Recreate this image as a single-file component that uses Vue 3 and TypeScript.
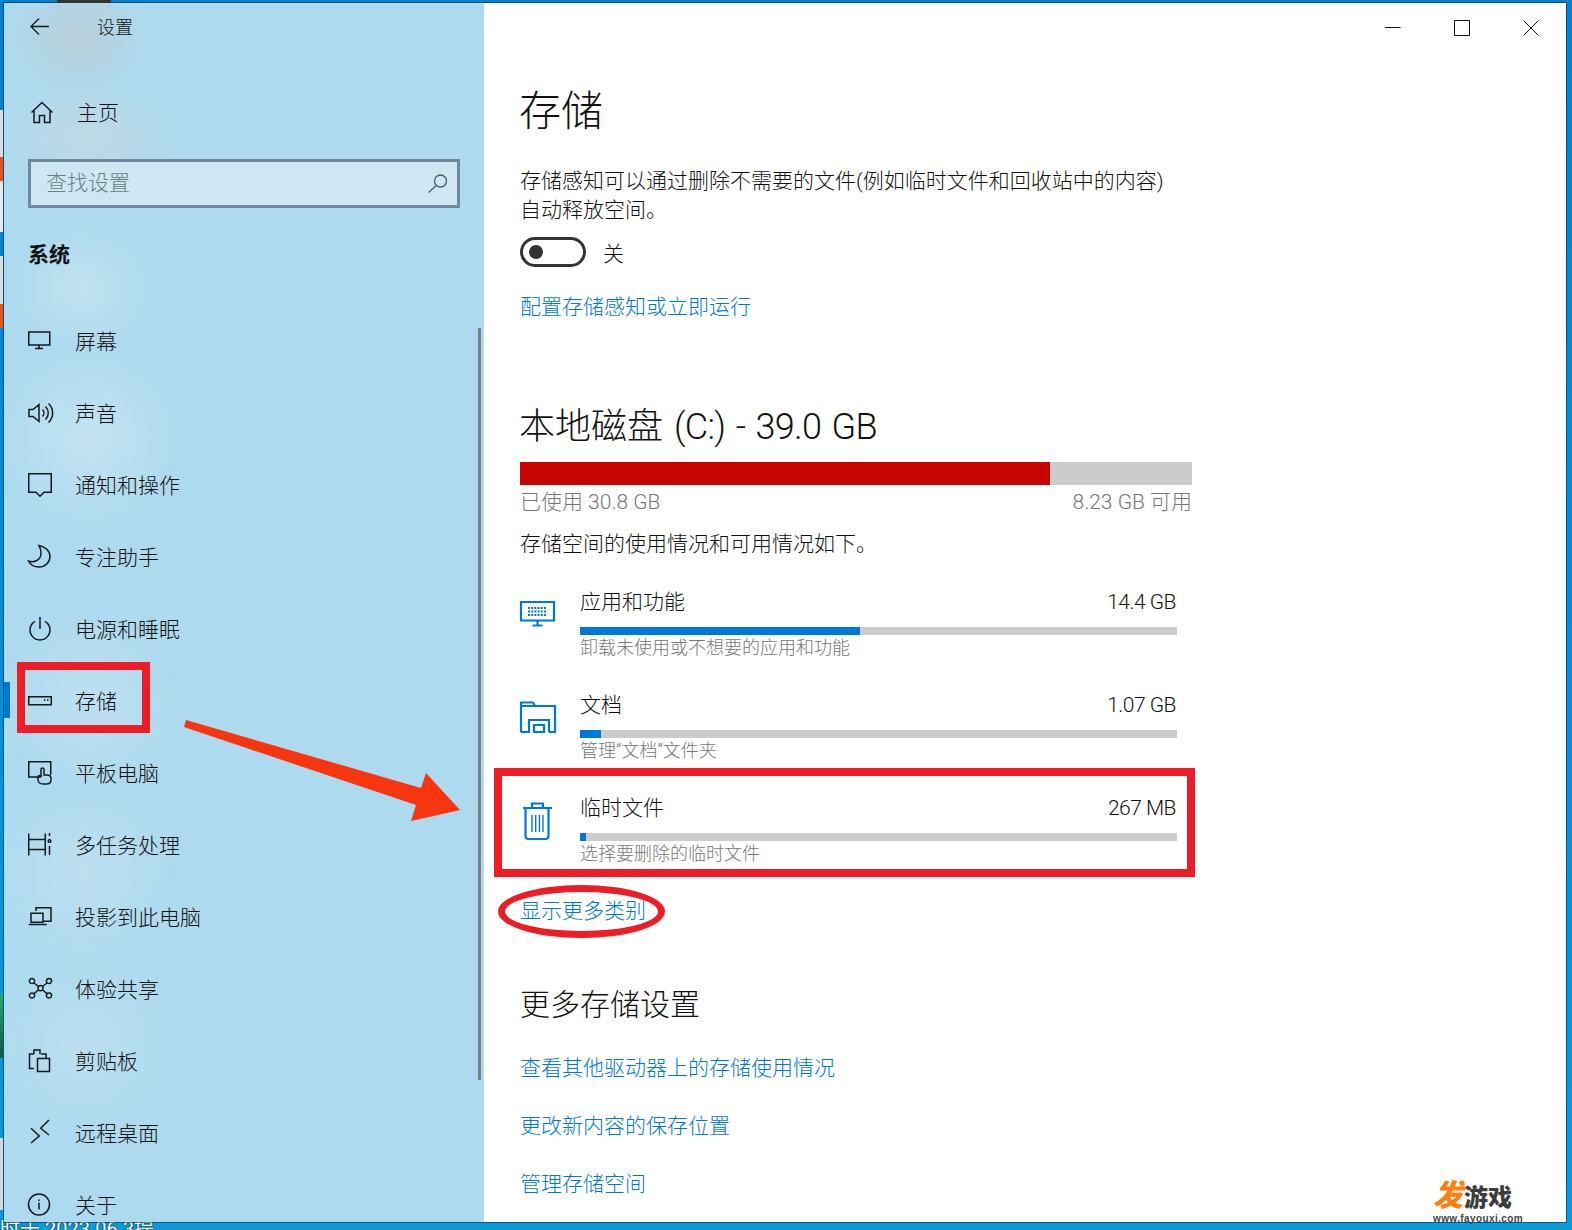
<script setup lang="ts">
const circle = (cx: number, cy: number, r: number): string =>
  `M${cx - r} ${cy}a${r} ${r} 0 1 0 ${2 * r} 0a${r} ${r} 0 1 0 ${-2 * r} 0`

interface NavItem { label: string; d: string }

const navItems: NavItem[] = [
  { label: '屏幕', d: 'M.75 3h21v13H.75zM11 16v3.5M7 19.5h8' },
  { label: '声音', d: 'M1 8.5h4L11 3.5v17l-6-5H1zM14.5 8.5a5 5 0 0 1 0 7M17.5 5.5a9 9 0 0 1 0 13M20.5 2.5a13 13 0 0 1 0 19' },
  { label: '通知和操作', d: 'M.75.75h22.5v18.5H16l-4 4-4-4H.75z' },
  { label: '专注助手', d: 'M11 .5c6 1 11 5.5 11 11 0 6-5 10.5-11 10.5-4.5 0-8.5-2-10.5-6 6 2 12-1 12.5-7 .2-3.5-.5-6-2-8.5z' },
  { label: '电源和睡眠', d: 'M12 0v12M7 4.3A10 10 0 1 0 17 4.3' },
  { label: '存储', d: 'M.75 7.75h22.5v8H.75zM16 11h1.5M19 11h1.5' },
  { label: '平板电脑', d: 'M13 16H.75V.75h22v13M15 23c-2 0-4.5-1-5-4v-3c0-2 3-2 3 0V8.5c0-2 3-2 3 0V14h3c2.5 0 4 1 4 3.5v1c0 3-2 4.5-4.5 4.5z' },
  { label: '多任务处理', d: 'M.75.5v6h16.5v-6M.75 6.5v10h16.5v-10M.75 16.5v6M17.25 16.5v6M21.5 0v3M21.5 13v9' + circle(21.5, 8, 1.3) },
  { label: '投影到此电脑', d: 'M8 6V2.75h15v13.5h-8M3 8.25h12v9H3zM.75 19.5h18' },
  { label: '体验共享', d: circle(4, 4, 2.6) + circle(21, 4, 2.6) + circle(4, 18.5, 2.6) + circle(21, 18.5, 2.6) + circle(12.5, 11.2, 2.6) + 'M6 6l4.5 3.5M19 6l-4.5 3.5M6 16.7l4.5-3.7M19 16.7l-4.5-3.7' },
  { label: '剪贴板', d: 'M6 19.5H1.5V5h4.5M13 5h5v4M6 5V1h6v4M9.5 9.5h12v13h-12z' },
  { label: '远程桌面', d: 'M21 -1L12.7 7.3 21 14M3 7.3l8.3 7.7L3 22' },
  { label: '关于', d: circle(11, 11.5, 10.5) + 'M11 9.5v7M11 6.5v1.5' },
]

interface UsageItem { name: string; size: string; desc: string; pct: number; kind: string }

const usage: UsageItem[] = [
  { name: '应用和功能', size: '14.4 GB', desc: '卸载未使用或不想要的应用和功能', pct: 46.9, kind: 'apps' },
  { name: '文档', size: '1.07 GB', desc: '管理“文档”文件夹', pct: 3.6, kind: 'docs' },
  { name: '临时文件', size: '267 MB', desc: '选择要删除的临时文件', pct: 1, kind: 'temp' },
]

const moreLinks: string[] = ['查看其他驱动器上的存储使用情况', '更改新内容的保存位置', '管理存储空间']
</script>

<template>
  <div class="desktop">
    <div class="bottom-text">时于 2023.06 3提</div>
    <div class="window">
      <aside class="sidebar">
        <div class="header">
          <svg class="icon" viewBox="0 0 24 24"><path d="M21 10.5H3M11 2.5l-8 8 8 8" /></svg>
          <span class="header-title">设置</span>
        </div>
        <div class="home">
          <svg class="icon" viewBox="0 0 24 24"><path d="M3.5 11.5L14 1.5l10.5 10M6 9v12.5h5.5v-7h5v7H22V9" /></svg>
          <span class="home-label">主页</span>
        </div>
        <div class="search">
          <span class="search-label">查找设置</span>
          <svg class="search-icon" viewBox="0 0 20 20"><path d="M7.5 7a6 6 0 1 0 12 0a6 6 0 1 0-12 0M9.2 11.5L1.5 18.5" /></svg>
        </div>
        <div class="section">系统</div>
        <nav class="nav">
          <div v-for="item in navItems" :key="item.label" class="nav-row">
            <svg class="icon" viewBox="0 0 24 24"><path :d="item.d" /></svg>
            <span class="nav-label">{{ item.label }}</span>
          </div>
        </nav>
        <div class="active-mark"></div>
        <div class="scrollbar"></div>
      </aside>

      <main class="content">
        <div class="controls">
          <svg viewBox="0 0 16 16"><path d="M0 7.5h15.5" /></svg>
          <svg viewBox="0 0 16 16"><path d="M.5.5h15v15H.5z" /></svg>
          <svg viewBox="0 0 16 16"><path d="M.5.5l15 15M15.5.5l-15 15" /></svg>
        </div>

        <h1 class="title">存储</h1>
        <p class="para">存储感知可以通过删除不需要的文件(例如临时文件和回收站中的内容)<br />自动释放空间。</p>
        <div class="toggle-row">
          <span class="toggle"><span class="knob"></span></span>
          <span>关</span>
        </div>
        <a class="link first-link">配置存储感知或立即运行</a>

        <h2 class="disk">本地磁盘 <span class="disk-latin">(C:) - 39.0 GB</span></h2>
        <div class="disk-bar"><div class="disk-used"></div></div>
        <div class="disk-labels"><span>已使用 30.8 GB</span><span>8.23 GB 可用</span></div>
        <p class="intro">存储空间的使用情况和可用情况如下。</p>

        <div class="usage">
          <div v-for="u in usage" :key="u.kind" class="usage-item">
            <svg class="usage-icon" viewBox="0 0 40 40">
              <template v-if="u.kind === 'apps'">
                <path d="M1 7h33v18.5H1zM17.5 25.5v5M12.5 30.5h10" />
                <path class="dots" d="M8 13h19M8 16.5h19M8 20h19" />
              </template>
              <template v-else-if="u.kind === 'docs'">
                <path d="M1 34V4.5h12l2 3.5h20v26h-6M1 8h14M1 34h8v-12h20v12M14 34v-7h10v7h-10z" />
              </template>
              <template v-else>
                <path d="M3 7h29M12 6V2.5h11V6M5.5 7v28c0 2 1 3 3 3h17c2 0 3-1 3-3V7" />
                <path class="trash-lines" d="M12 14v17M15.7 14v17M19.4 14v17M23 14v17" />
              </template>
            </svg>
            <div class="usage-body">
              <div class="usage-head"><span>{{ u.name }}</span><span class="usage-size">{{ u.size }}</span></div>
              <div class="usage-bar"><div class="usage-fill" :style="{ width: u.pct + '%' }"></div></div>
              <div class="usage-desc">{{ u.desc }}</div>
            </div>
          </div>
        </div>

        <a class="link more-cat">显示更多类别</a>
        <h3 class="more-title">更多存储设置</h3>
        <a v-for="l in moreLinks" :key="l" class="link more-link">{{ l }}</a>
      </main>
    </div>

    <div class="strip s1"></div>
    <div class="strip s2"></div>
    <div class="strip s3"></div>
    <div class="strip s4"></div>
    <div class="strip s5"></div>
    <div class="strip s6"></div>
    <div class="strip s7"></div>
    <div class="top-bit"></div>

    <div class="mark box-nav"></div>
    <div class="mark box-temp"></div>
    <div class="mark ellipse"></div>
    <svg class="arrow" viewBox="0 0 1572 1230">
      <polygon points="186,720 421,788 426,773 460,810 411,821 416,805 184,727" />
    </svg>

    <div class="watermark">
      <div class="wm-top"><span class="wm-fa">发</span><span class="wm-yx">游戏</span></div>
      <div class="wm-url">www.fayouxi.com</div>
    </div>
  </div>
</template>

<style>
html, body { margin: 0; padding: 0; }
</style>

<style scoped>
.desktop {
  position: relative;
  width: 1572px;
  height: 1230px;
  box-sizing: border-box;
  padding: 3px 6px 8px 4px;
  overflow: hidden;
  background: linear-gradient(180deg, #0a7fcb 0%, #0a8fd4 60%, #0a9bd8 100%);
  font-family: Roboto, "Noto Sans CJK SC", sans-serif;
  font-weight: 300;
  font-size: 21px;
  color: #111;
}
.window {
  position: relative;
  display: flex;
  height: 100%;
  background: #fff;
  overflow: hidden;
  box-shadow: 0 0 0 1px rgba(0, 40, 70, 0.55);
}
.sidebar {
  position: relative;
  flex: none;
  width: 480px;
  box-sizing: border-box;
  padding-left: 24px;
  overflow: hidden;
  background:
    radial-gradient(ellipse 70px 60px at 75px 35px, rgba(190, 200, 200, 0.6), transparent),
    radial-gradient(ellipse 90px 60px at 85px 135px, rgba(205, 215, 220, 0.55), transparent),
    radial-gradient(ellipse 70px 60px at 78px 285px, rgba(200, 230, 240, 0.7), transparent),
    radial-gradient(ellipse 90px 90px at 85px 435px, rgba(205, 232, 243, 0.7), transparent),
    radial-gradient(ellipse 90px 90px at 85px 700px, rgba(200, 228, 241, 0.6), transparent),
    radial-gradient(ellipse 90px 90px at 80px 870px, rgba(200, 228, 241, 0.6), transparent),
    radial-gradient(ellipse 90px 90px at 80px 1040px, rgba(200, 228, 241, 0.5), transparent),
    #aedaef;
}
.icon {
  flex: none;
  display: block;
  width: 24px;
  height: 24px;
  overflow: visible;
  fill: none;
  stroke: #151a1d;
  stroke-width: 1.5;
}
.header {
  display: flex;
  align-items: center;
  height: 50px;
  gap: 45px;
}
.header .icon { stroke-width: 1.3; }
.header-title { font-size: 18px; padding-bottom: 4px; }
.home {
  display: flex;
  align-items: center;
  height: 50px;
  margin-top: 35px;
  gap: 25px;
}
.home-label { padding-bottom: 4px; }
.search {
  display: flex;
  align-items: center;
  justify-content: space-between;
  box-sizing: border-box;
  width: 432px;
  height: 49px;
  margin-top: 21px;
  padding: 0 10px 0 15px;
  border: 3px solid #6f8a9c;
  background: #cfe7f3;
  color: #6b7d87;
}
.search-label { padding-bottom: 5px; }
.search-icon {
  width: 20px;
  height: 20px;
  fill: none;
  stroke: #4a5b66;
  stroke-width: 1.3;
}
.section {
  display: flex;
  align-items: center;
  height: 50px;
  margin-top: 22px;
  padding-bottom: 4px;
  box-sizing: border-box;
  font-weight: 700;
}
.nav { margin-top: 25px; }
.nav-row {
  display: flex;
  align-items: center;
  gap: 23px;
  height: 72px;
}
.nav-label { padding-bottom: 2px; }
.active-mark {
  position: absolute;
  left: 0;
  top: 679px;
  width: 6px;
  height: 36px;
  background: #0078d7;
}
.scrollbar {
  position: absolute;
  left: 474px;
  top: 325px;
  width: 3px;
  height: 752px;
  background: #7c8185;
}
.content {
  position: relative;
  flex: 1;
  box-sizing: border-box;
  padding: 79px 0 0 36px;
  overflow: hidden;
}
.controls {
  position: absolute;
  right: 27px;
  top: 17px;
  display: flex;
  gap: 53px;
}
.controls svg {
  display: block;
  width: 16px;
  height: 16px;
  fill: none;
  stroke: #111;
  stroke-width: 1;
}
.title {
  margin: 0 0 0 -1px;
  font-size: 42px;
  font-weight: 300;
  line-height: 60px;
}
.para {
  margin: 25px 0 0;
  line-height: 29px;
}
.toggle-row {
  display: flex;
  align-items: center;
  gap: 17px;
  height: 30px;
  margin-top: 12px;
}
.toggle {
  display: flex;
  align-items: center;
  box-sizing: border-box;
  width: 66px;
  height: 30px;
  padding-left: 6px;
  border: 3px solid #333;
  border-radius: 15px;
}
.knob {
  width: 14px;
  height: 14px;
  border-radius: 50%;
  background: #333;
}
.link {
  display: block;
  width: fit-content;
  line-height: 30px;
  color: #0078d7;
}
.first-link { margin-top: 25px; }
.disk {
  margin: 80px 0 0 -1px;
  font-size: 36px;
  font-weight: 300;
  line-height: 50px;
  word-spacing: 2.2px;
}
.disk-latin { letter-spacing: -0.7px; }
.disk-bar {
  width: 672px;
  height: 23px;
  margin-top: 10px;
  background: #ccc;
}
.disk-used {
  width: 78.9%;
  height: 100%;
  background: #c50500;
}
.disk-labels {
  display: flex;
  justify-content: space-between;
  width: 672px;
  margin-top: 2px;
  line-height: 30px;
  color: #767676;
}
.intro {
  margin: 12px 0 0;
  line-height: 30px;
}
.usage {
  display: flex;
  flex-direction: column;
  gap: 30px;
  margin-top: 28px;
}
.usage-item {
  display: flex;
  width: 657px;
}
.usage-icon {
  flex: none;
  width: 40px;
  height: 40px;
  margin: 8px 20px 0 0;
  overflow: visible;
  fill: none;
  stroke: #0078d7;
  stroke-width: 2.2;
}
.dots {
  stroke-width: 2;
  stroke-dasharray: 2 1.2;
}
.trash-lines { stroke-width: 1.4; }
.usage-body { flex: 1; }
.usage-head {
  display: flex;
  justify-content: space-between;
  line-height: 30px;
}
.usage-size {
  letter-spacing: -0.5px;
  padding-right: 1px;
}
.usage-bar {
  height: 8px;
  margin-top: 10px;
  background: #ccc;
}
.usage-fill {
  height: 100%;
  background: #0078d7;
}
.usage-desc {
  margin-top: 1px;
  font-size: 18px;
  line-height: 24px;
  color: #767676;
}
.more-cat { margin-top: 30px; }
.more-title {
  margin: 54px 0 0;
  font-size: 30px;
  font-weight: 300;
  line-height: 50px;
}
.more-link { margin-top: 28px; }
.more-title + .more-link { margin-top: 23px; }

.strip {
  position: absolute;
  left: 0;
  width: 3px;
}
.s1 { top: 110px; height: 47px; background: #ddd; }
.s2 { top: 157px; height: 24px; background: #e8501c; }
.s3 { top: 181px; height: 51px; background: #e9e9e9; }
.s4 { top: 256px; height: 48px; background: #ddd; }
.s5 { top: 304px; height: 24px; background: #e8501c; }
.s6 { top: 995px; height: 63px; background: linear-gradient(180deg, #2aa866, #12573a); }
.s7 { top: 1138px; height: 72px; background: #d8d8d8; }
.top-bit {
  position: absolute;
  left: 57px;
  top: 0;
  width: 54px;
  height: 3px;
  background: #333;
}
.bottom-text {
  position: absolute;
  left: 0;
  top: 1216px;
  font-size: 20px;
  font-weight: 400;
  line-height: 26px;
  color: #fff;
  text-shadow: 0 0 2px #111;
  white-space: nowrap;
}
.mark {
  position: absolute;
  box-sizing: border-box;
  border: 8px solid #ee1c25;
}
.box-nav { left: 17px; top: 662px; width: 133px; height: 71px; }
.box-temp { left: 494px; top: 768px; width: 701px; height: 109px; }
.ellipse {
  left: 498px;
  top: 885px;
  width: 167px;
  height: 53px;
  border-width: 7px;
  border-radius: 50%;
}
.arrow {
  position: absolute;
  left: 0;
  top: 0;
  width: 1572px;
  height: 1230px;
  fill: #f7350f;
  pointer-events: none;
}
.watermark {
  position: absolute;
  left: 1433px;
  top: 1180px;
  width: 92px;
}
.wm-top {
  display: flex;
  align-items: flex-end;
  height: 31px;
  font-family: "Liberation Sans", "Noto Sans CJK SC", sans-serif;
  font-weight: 900;
}
.wm-fa {
  font-size: 30px;
  line-height: 31px;
  color: #ff7f0e;
  font-style: italic;
}
.wm-yx {
  margin-left: 1px;
  font-size: 24px;
  line-height: 27px;
  color: #3c3c3c;
}
.wm-url {
  margin-top: 3px;
  font-family: "Liberation Sans", sans-serif;
  font-size: 10px;
  font-weight: 700;
  line-height: 9px;
  letter-spacing: 0.4px;
  color: #444;
}
</style>
